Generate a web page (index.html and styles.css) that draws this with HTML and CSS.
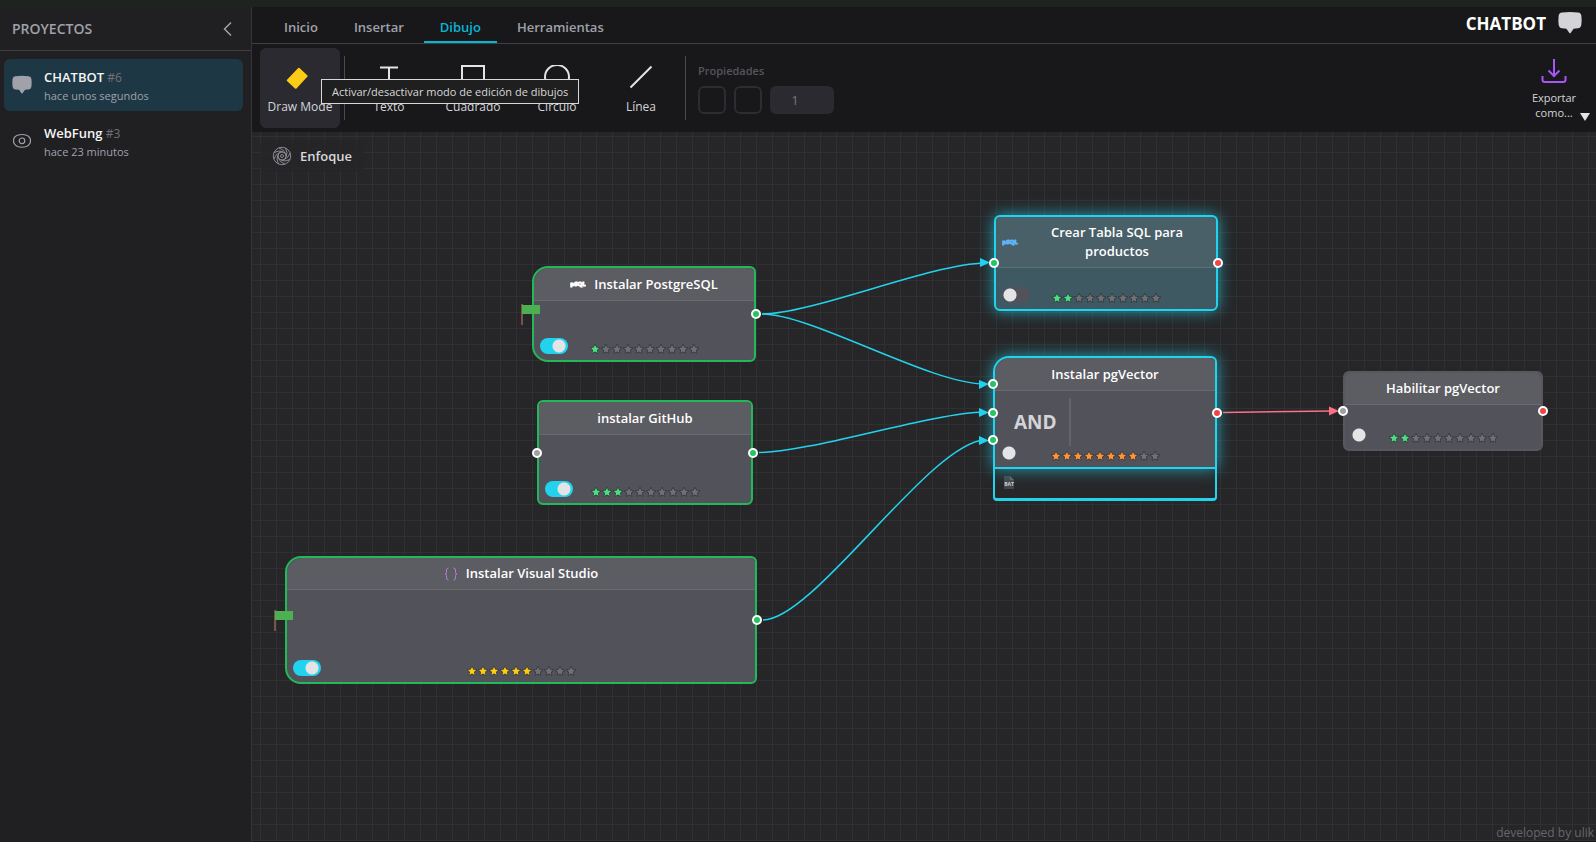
FILE: index.html
```html
<!DOCTYPE html>
<html lang="es">
<head>
<meta charset="utf-8">
<title>CHATBOT</title>
<link rel="stylesheet" href="styles.css">
</head>
<body>
<svg class="defs" aria-hidden="true">
  <symbol id="bubble" viewBox="0 0 24 24"><path d="M4 1.6Q12 .4 20 1.6Q23 2 23.4 5Q23.9 10 23.3 14Q22.8 17 20 17.3L15.6 17.7L12.6 22Q12 22.8 11.400 22L8.400 17.7L4 17.3Q1.200 17 .7 14Q.1 10 .6 5Q1 2 4 1.600Z" fill="currentColor"/></symbol>
  <symbol id="star" viewBox="0 0 12 12"><path d="M6 1L7.500 4.300L11 4.700L8.400 7.100L9.100 10.700L6 8.900L2.900 10.700L3.600 7.100L1 4.700L4.500 4.300Z" fill="currentColor" stroke="#2e2e33" stroke-width="1.500" stroke-linejoin="round" paint-order="stroke"/></symbol>
  <symbol id="flag" viewBox="0 0 20 22"><path d="M1 0V21" stroke="#795548" stroke-width="2"/><path d="M1 1H19V10H1Z" fill="#4caf50"/></symbol>
</svg>
<div class="topstrip"></div>
<div class="app">
  <aside class="sidebar">
    <header class="sidebar-head">
      <h2>PROYECTOS</h2>
      <button class="collapse" aria-label="Contraer"><svg width="10" height="16" viewBox="0 0 10 16"><path d="M8 1.500L1.500 8L8 14.500"/></svg></button>
    </header>
    <nav class="projects">
      <a class="project active" href="#"><svg class="p-icon" viewBox="0 0 24 24"><use href="#bubble"/></svg>
        <span class="p-text"><span class="p-name"><b>CHATBOT</b> #6</span><span class="p-time">hace unos segundos</span></span></a>
      <a class="project" href="#"><svg class="p-icon" viewBox="0 0 20 20" fill="none" stroke="currentColor" stroke-width="1.200"><path d="M1.500 9.500Q1.500 6 5.500 4.300Q10 2.700 14.500 4.300Q18.500 6 18.500 9.500Q18.500 13.500 14.500 15.500Q10 17 5.500 15.500Q1.500 13.500 1.500 9.500Z"/><circle cx="10" cy="9.800" r="2.800"/></svg>
        <span class="p-text"><span class="p-name"><b>WebFung</b> #3</span><span class="p-time">hace 23 minutos</span></span></a>
    </nav>
  </aside>
  <main class="workspace">
    <header class="tabs">
      <nav class="tablist">
        <button class="tab">Inicio</button><button class="tab">Insertar</button><button class="tab current">Dibujo</button><button class="tab">Herramientas</button>
      </nav>
      <div class="brand"><h1>CHATBOT</h1><svg width="24" height="24"><use href="#bubble"/></svg></div>
    </header>
    <div class="toolbar">
      <button class="tool pressed"><svg width="24" height="24" viewBox="3 -1 24 24"><path d="M14.500 2L22.500 9.500Q23 10 22.500 10.600L11.500 22.400Q10.700 23 10 22.400L2 14.900Q1.500 14.400 2 13.700L13.200 2Q13.900 1.400 14.500 2Z" fill="#facc15"/></svg>Draw Mode</button>
      <span class="divider"></span>
      <button class="tool"><svg width="24" height="24" viewBox="0 0 24 24"><path d="M3 2.500H21M12 2.500V20M8 20H16"/></svg>Texto</button>
      <button class="tool"><svg width="24" height="24" viewBox="0 0 24 24"><path d="M1 1H23V23H1Z"/></svg>Cuadrado</button>
      <button class="tool"><svg width="26" height="24" viewBox="0 0 26 24"><circle cx="13" cy="12" r="12"/></svg>Círculo</button>
      <button class="tool"><svg width="24" height="24" viewBox="0 0 24 24"><path d="M1.500 22.500L22.500 1.500"/></svg>Línea</button>
      <span class="divider"></span>
      <fieldset class="props" disabled>
        <legend>Propiedades</legend>
        <button class="swatch" aria-label="Color de línea"></button>
        <button class="swatch" aria-label="Color de relleno"></button>
        <input type="text" class="amount" value="1" aria-label="Grosor">
      </fieldset>
      <button class="tool export"><svg width="26" height="26" viewBox="0 0 26 26"><path d="M13 1V18M7.500 12.500L13 18L18.500 12.500M1.500 18V22Q1.500 24 4 24H22Q24.500 24 24.500 22V18"/></svg>Exportar como...<svg class="caret" width="10" height="8" viewBox="0 0 10 8"><path d="M0 0H10L5 8Z"/></svg></button>
      <div class="tooltip" role="tooltip">Activar/desactivar modo de edición de dibujos</div>
    </div>
    <section class="canvas">
      <button class="focus"><svg width="20" height="20" viewBox="0 0 20 20"><circle cx="10" cy="10" r="8.700"/><circle cx="10" cy="10" r="1.500"/><circle cx="10" cy="10" r="4"/><path id="blade" d="M13.500 7.500Q12 3.500 7 2"/><use href="#blade" transform="rotate(45 10 10)"/><use href="#blade" transform="rotate(90 10 10)"/><use href="#blade" transform="rotate(135 10 10)"/><use href="#blade" transform="rotate(180 10 10)"/><use href="#blade" transform="rotate(225 10 10)"/><use href="#blade" transform="rotate(270 10 10)"/><use href="#blade" transform="rotate(315 10 10)"/></svg>Enfoque</button>
      <svg class="edges" aria-hidden="true">
        <g class="flow">
          <path d="M510 182C560 182 678 132 733 131"/><path class="tip" d="M728 126L738 130.500L728 135Z"/>
          <path d="M510 182C560 182 678 252 733 252"/><path class="tip" d="M727 248L737 252L727 257Z"/>
          <path d="M507 320.500C560 320 678 281 733 280"/><path class="tip" d="M727 276L737 280.500L727 285Z"/>
          <path d="M511 488C562 488 678 310 733 308"/><path class="tip" d="M727 304L737 308.500L727 313Z"/>
        </g>
        <g class="flow blocked"><path d="M971 280.500L1080 279"/><path class="tip" d="M1077 274.500L1087 279L1077 283.500Z"/></g>
      </svg>

      <article class="node done start n-postgres">
        <svg class="flag"><use href="#flag"/></svg>
        <h3><svg class="mini" viewBox="0 0 16 12"><text x="8" y="8" text-anchor="middle">pSQL</text></svg><span>Instalar PostgreSQL</span></h3>
        <input class="switch" type="checkbox" role="switch" aria-label="Activar Instalar PostgreSQL" checked>
        <div class="stars green" data-rating="1"></div><i class="port out ok"></i>
      </article>

      <article class="node done n-github">
        <h3><span>instalar GitHub</span></h3>
        <input class="switch" type="checkbox" role="switch" aria-label="Activar instalar GitHub" checked>
        <div class="stars green" data-rating="3"></div><i class="port in"></i><i class="port out ok"></i>
      </article>

      <article class="node done start n-studio">
        <svg class="flag"><use href="#flag"/></svg>
        <h3><svg class="mini braces" viewBox="0 0 14 14"><path d="M4.500 1Q2.500 1 2.500 3V5.500Q2.500 7 1 7Q2.500 7 2.500 8.500V11Q2.500 13 4.500 13M9.500 1Q11.500 1 11.500 3V5.500Q11.500 7 13 7Q11.500 7 11.500 8.500V11Q11.500 13 9.500 13"/></svg><span>Instalar Visual Studio</span></h3>
        <input class="switch" type="checkbox" role="switch" aria-label="Activar Instalar Visual Studio" checked>
        <div class="stars yellow" data-rating="6"></div><i class="port out ok"></i>
      </article>

      <article class="node glow tinted n-table">
        <h3><svg class="mini" viewBox="0 0 16 12"><text x="8" y="8" text-anchor="middle">pSQL</text></svg><span>Crear Tabla SQL para productos</span></h3>
        <input class="switch" type="checkbox" role="switch" aria-label="Activar Crear Tabla SQL para productos">
        <div class="stars green" data-rating="2"></div><i class="port in ok"></i><i class="port out bad"></i>
      </article>

      <div class="attachment"><svg width="12" height="16" viewBox="0 0 12 16"><path d="M1 1H7L11 5V14H1Z" fill="#464649"/><path d="M7 1L11 5H7Z" fill="#626265"/><text x="6" y="11" text-anchor="middle">BAT</text></svg></div>
      <article class="node glow n-vector">
        <h3><span>Instalar pgVector</span></h3>
        <div class="gate">AND</div>
        <input class="switch" type="checkbox" role="switch" aria-label="Activar Instalar pgVector">
        <div class="stars orange" data-rating="8"></div><i class="port in ok first"></i><i class="port in ok"></i><i class="port in ok last"></i><i class="port out bad"></i>
      </article>

      <article class="node n-enable">
        <h3><span>Habilitar pgVector</span></h3>
        <input class="switch" type="checkbox" role="switch" aria-label="Activar Habilitar pgVector">
        <div class="stars green" data-rating="2"></div><i class="port in"></i><i class="port out bad"></i>
      </article>
      <small class="credit">developed by ulik</small>
    </section>
  </main>
</div>
<script src="stars.js"></script>
</body>
</html>
```
FILE: styles.css
```css
* { box-sizing: border-box; }
body { margin: 0; height: 100vh; display: flex; flex-direction: column; background: #202022; color: #e4e4e7; font-family: "Open Sans", "Noto Sans", sans-serif; font-size: 13px; }
button { font: inherit; color: inherit; background: none; border: 0; padding: 0; }
h1, h2, h3 { margin: 0; }
.defs { display: none; }
.topstrip { height: 7px; background: #1f231f; flex: none; }
.app { flex: 1; display: flex; min-height: 0; }

.sidebar { width: 252px; flex: none; background: #202022; border-right: 1px solid #343437; }
.sidebar-head { height: 44px; padding: 0 16px 0 12px; display: flex; align-items: center; justify-content: space-between; border-bottom: 1px solid #3f3f42; color: #a1a1aa; }
.sidebar-head h2 { font-size: 14px; font-weight: 600; }
.collapse { display: flex; padding: 0 2px; }
.collapse svg { fill: none; stroke: #a1a1aa; stroke-width: 1.5; }
.projects { display: flex; flex-direction: column; gap: 4px; padding: 8px 8px 8px 4px; }
.project { display: flex; align-items: center; gap: 12px; height: 52px; padding: 0 8px; border-radius: 6px; color: #a1a1aa; text-decoration: none; }
.project.active { background: #1d3744; }
.p-icon { width: 20px; height: 20px; }
.p-text { display: flex; flex-direction: column; padding-top: 2px; }
.p-name { font-size: 12px; line-height: 19px; color: #71717a; }
.p-name b { font-size: 13px; font-weight: 600; color: #f4f4f5; }
.p-time { font-size: 11px; line-height: 18px; }

.workspace { flex: 1; min-width: 0; display: flex; flex-direction: column; }
.tabs { height: 37px; flex: none; padding: 0 14px 0 16px; display: flex; justify-content: space-between; background: #18181a; border-bottom: 1px solid #3f3f42; }
.tablist { display: flex; gap: 4px; }
.tab { padding: 6px 16px 0; border-bottom: 2px solid transparent; font-weight: 600; color: #a1a1aa; }
.tab.current { color: #06b6d4; border-color: #06b6d4; }
.brand { display: flex; align-items: flex-start; gap: 12px; padding-top: 4px; color: #d4d4d8; }
.brand h1 { font-size: 17px; line-height: 25px; font-weight: 700; color: #fff; }

.toolbar { position: relative; height: 88px; flex: none; display: flex; align-items: center; gap: 4px; padding: 4px 2px 4px 8px; background: #18181a; }
.tool { position: relative; width: 80px; height: 80px; padding-top: 2px; border-radius: 6px; display: flex; flex-direction: column; align-items: center; justify-content: center; gap: 10px; font-size: 12px; line-height: 15px; color: #d4d4d8; }
.tool svg { fill: none; stroke: #e4e4e7; stroke-width: 2; }
.tool.pressed { background: #2a2a30; }
.tool.pressed svg { stroke: none; overflow: visible; }
.divider { width: 1px; height: 64px; background: #4a4a50; }
.props { display: grid; grid-template-columns: 28px 28px 64px; gap: 8px; margin: 0 0 0 8px; padding: 0; border: 0; }
.props legend { margin-bottom: 7px; padding: 1px 0 0; font-size: 11px; line-height: 16px; font-weight: 600; color: #55555c; }
.swatch { height: 28px; border: 2px solid #2c2c33; border-radius: 6px; }
.amount { width: 64px; height: 28px; padding: 0 14px 0 0; border: 0; border-radius: 6px; background: #2a2a30; color: #77777c; font: inherit; text-align: center; }
.export { margin-left: auto; padding: 2px 16px 0; gap: 6px; font-size: 11px; }
.export > svg:first-child { stroke: #a855f7; }
.export .caret { position: absolute; right: 4px; bottom: 7px; fill: #e4e4e7; stroke: none; }
.tooltip { position: absolute; left: 69px; top: 35px; z-index: 5; padding: 0 10px; border: 1px solid #d8d8d8; background: #1f1f1f; color: #d8d8d8; font-size: 11px; line-height: 23px; white-space: nowrap; }

.canvas { position: relative; flex: 1; overflow: hidden; background-color: #262628; background-image: linear-gradient(#303033 1px, transparent 1px), linear-gradient(90deg, #303033 1px, transparent 1px); background-size: 16px 16px; background-position: 8px 4px; border-bottom: 1px solid #18181a; }
.focus { display: flex; align-items: center; gap: 8px; margin: 8px; padding: 0 12px; height: 32px; border-radius: 6px; background: rgba(38, 38, 40, .8); font-weight: 600; color: #d8d8da; }
.focus svg { fill: none; stroke: #a1a1aa; stroke-width: .8; }
.edges { position: absolute; inset: 0; width: 100%; height: 100%; }
.flow { fill: none; stroke: #22d3ee; stroke-width: 1.5; }
.flow .tip { fill: #22d3ee; stroke: none; }
.blocked { stroke: #fb7185; }
.blocked .tip { fill: #fb7185; }

.node { position: absolute; border-radius: 6px; border: 2px solid #57575e; background: #52525a; }
.done { border-color: #22b95a; }
.start { border-radius: 16px 6px 6px 16px; }
.glow { border-color: #22d3ee; box-shadow: 0 0 16px rgba(34, 211, 238, .7); }
.node h3 { display: flex; align-items: center; justify-content: center; gap: 8px; min-height: 33px; padding: 0 8px; background: #5c5c63; border-bottom: 1px solid #6a6a6e; border-radius: inherit; border-bottom-left-radius: 0; border-bottom-right-radius: 0; font-size: 13px; line-height: 19px; font-weight: 600; color: #fff; text-align: center; }
.mini { width: 16px; height: 12px; flex: none; fill: #fff; }
.mini text { font-size: 6px; font-weight: 700; stroke: currentColor; stroke-width: 1; }
.braces { width: 14px; height: 14px; fill: none; stroke: #b07fd0; }
.tinted { background: #3e5962; }
.tinted h3 { padding: 6px 8px 6px 6px; background: #4a6069; border-color: #5b7078; }
.tinted h3 span { flex: 1; padding: 0 16px; }
.tinted .mini { fill: #60b5fa; color: #60b5fa; }
.switch { appearance: none; position: absolute; left: 6px; bottom: 6px; width: 28px; height: 16px; margin: 0; border-radius: 8px; background: radial-gradient(circle at 8px 8px, #e4e4e7 6px, #52525a 7px); }
.switch:checked { background: radial-gradient(circle at 19px 8px, #e4e4e7 6px, #22d3ee 7px); }
.stars { position: absolute; inset: auto 0 6px; display: flex; justify-content: center; gap: 1px; color: #6f6f76; }
.stars svg { width: 10px; height: 10px; }
.green .lit { color: #4ade80; }
.yellow .lit { color: #facc15; }
.orange .lit { color: #fb923c; }
.port { position: absolute; top: 50%; width: 10px; height: 10px; margin: -5px; border: 2px solid #fff; border-radius: 50%; background: #9f9fa6; }
.port.in { left: -2px; }
.port.out { right: -2px; }
.port.ok { background: #22c55e; }
.port.bad { background: #ef4444; }
.port.first { top: 26px; }
.port.last { top: 82px; }
.flag { position: absolute; left: -13px; top: 36px; width: 20px; height: 22px; z-index: 1; }
.gate { display: flex; align-items: center; width: 76px; height: 48px; margin-top: 7px; padding-left: 19px; border-right: 2px solid #64646c; font-size: 19px; font-weight: 700; color: #d4d4d8; }
.attachment { position: absolute; left: 741px; top: 320px; width: 224px; height: 49px; padding: 21px 8px 0; border: 2px solid #22d3ee; border-bottom-width: 3px; border-radius: 0 0 4px 4px; background: #272729; }
.attachment text { font-size: 5px; font-weight: 700; fill: #d4d4d8; }
.n-postgres { left: 280px; top: 134px; width: 224px; height: 96px; }
.n-github { left: 285px; top: 268px; width: 216px; height: 105px; }
.n-studio { left: 33px; top: 424px; width: 472px; height: 128px; }
.n-studio .flag { top: 52px; }
.n-table { left: 742px; top: 83px; width: 224px; height: 96px; }
.n-vector { left: 741px; top: 224px; width: 224px; height: 113px; border-radius: 16px 6px 0 0; }
.n-enable { left: 1091px; top: 239px; width: 200px; height: 80px; }
.n-enable h3, .n-studio h3 { min-height: 32px; }
.credit { position: absolute; right: 2px; bottom: 0; font-size: 12px; line-height: 17px; color: #66666c; }
```
FILE: stars.js
```js
document.querySelectorAll('.stars').forEach(function (row) {
  var rating = Number(row.dataset.rating);
  for (var i = 0; i < 10; i++) {
    row.insertAdjacentHTML('beforeend', '<svg class="' + (i < rating ? 'lit' : '') + '"><use href="#star"/></svg>');
  }
});
```
